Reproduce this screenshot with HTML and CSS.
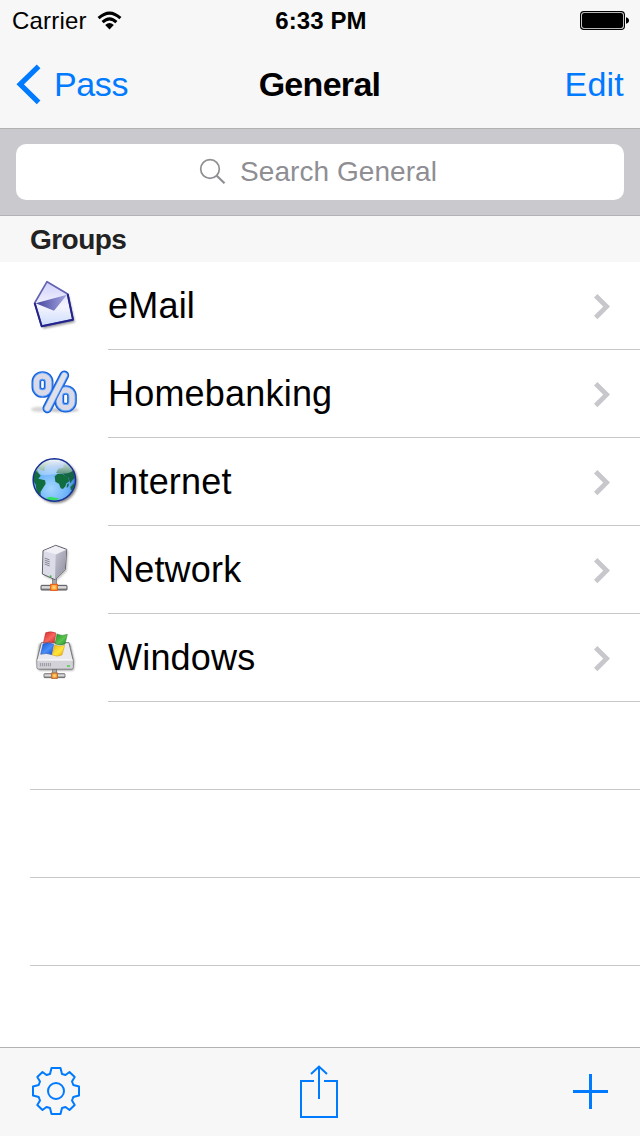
FILE: index.html
```
<!DOCTYPE html>
<html lang="en">
<head>
	<meta charset="UTF-8">
	<meta name="viewport" content="width=640">
	<title>General</title>
	<link rel="stylesheet" href="styles.css">
</head>
<body>
<header>
  <div class="status">
    <div class="carrier">
      <span>Carrier</span>
      <svg class="wifi" width="26" height="20" viewBox="0 0 26 20">
        <path d="M1.600 7.200Q12.500-3 23.400 7.200M5.600 11.200Q12.500 4.600 19.400 11.200" fill="none" stroke="#000" stroke-width="3"/>
        <path d="M8.200 14Q12.500 10 16.800 14L12.500 18.600Z"/>
      </svg>
    </div>
    <div class="time">6:33 PM</div>
    <svg class="battery" width="50" height="20" viewBox="0 0 50 20">
      <rect x=".6" y=".6" width="43.8" height="17.8" rx="3.2" fill="none" stroke="#000" stroke-width="1.2"/>
      <rect x="2" y="2" width="41" height="15" rx="2"/>
      <path d="M46 6.2Q49 7 49 9.5T46 12.8Z"/>
    </svg>
  </div>
  <nav>
    <a class="back">
      <svg width="26" height="42" viewBox="0 0 26 42"><path d="M23.6 3.3L5.2 21.3L23.6 39.3" fill="none" stroke="#007aff" stroke-width="5.2"/></svg>
      <span>Pass</span>
    </a>
    <h1>General</h1>
    <a class="edit">Edit</a>
  </nav>
</header>

<div class="search">
  <div class="field">
    <svg width="28" height="28" viewBox="0 0 28 28" fill="none" stroke="#8e8e93" stroke-width="1.7">
      <circle cx="11" cy="11" r="9.3"/>
      <path d="M17.5 17.5L25.5 25.3" stroke-width="2.2"/>
    </svg>
    <span>Search General</span>
  </div>
</div>

<main>
  <h2>Groups</h2>
  <ul class="groups">
    <li>
      <svg class="icon" viewBox="0 0 210 210">
        <defs>
          <linearGradient id="paper" x1="0" y1="0" x2="0" y2="1"><stop offset="0" stop-color="#d0d0fa"/><stop offset=".55" stop-color="#f4f4ff"/><stop offset="1" stop-color="#cdddfb"/></linearGradient>
          <linearGradient id="flap" x1="0" y1="0" x2="1" y2="0"><stop offset="0" stop-color="#46469c"/><stop offset="1" stop-color="#a4a4e2"/></linearGradient>
          <filter id="soft" x="-20%" y="-20%" width="140%" height="140%"><feGaussianBlur stdDeviation="2.5"/></filter>
        </defs>
        <path d="M50 103L85 41L146 77L165 157L70 176Z" fill="#666" opacity=".65" filter="url(#soft)"/>
        <path d="M44 99L81 35L143 72L159 149L65 169Z" fill="url(#paper)" stroke="#6262b4" stroke-width="5" stroke-linejoin="round"/>
        <path d="M47 100L141 74L102 122Z" fill="url(#flap)"/>
        <path d="M143 72L159 149L65 169L44 99" fill="none" stroke="#23238c" stroke-width="6" stroke-linejoin="round"/>
      </svg>
      <span>eMail</span>
      <svg class="more" viewBox="0 0 18 26"><path d="M2.700 1.700L13.600 12.600L2.700 23.500"/></svg>
    </li>
    <li>
      <svg class="icon" viewBox="0 0 210 210">
        <ellipse cx="57" cy="154" rx="24" ry="8" fill="#999" opacity=".4" filter="url(#soft)"/>
        <ellipse cx="130" cy="156" rx="46" ry="7" fill="#999" opacity=".55" filter="url(#soft)"/>
        <g fill="none" stroke-linecap="round">
          <g stroke="#1a5fd8" stroke-width="29">
            <rect x="49" y="54" width="37" height="51" rx="18"/>
            <rect x="118" y="96" width="38" height="53" rx="18"/>
            <path d="M133 52L82 151"/>
          </g>
          <g stroke="#5aa2fa" stroke-width="22">
            <rect x="49" y="54" width="37" height="51" rx="18"/>
            <rect x="118" y="96" width="38" height="53" rx="18"/>
          </g>
          <g stroke="#d9d9e7" stroke-width="16">
            <rect x="49" y="54" width="37" height="51" rx="18"/>
            <rect x="118" y="96" width="38" height="53" rx="18"/>
          </g>
          <path d="M133 52L82 151" stroke="#1a62dc" stroke-width="26"/>
          <path d="M133 52L82 151" stroke="#5aa2fa" stroke-width="21"/>
          <path d="M133 52L82 151" stroke="#e0e0eb" stroke-width="16"/>
        </g>
      </svg>
      <span>Homebanking</span>
      <svg class="more" viewBox="0 0 18 26"><path d="M2.700 1.700L13.600 12.600L2.700 23.500"/></svg>
    </li>
    <li>
      <svg class="icon" viewBox="0 0 210 210">
        <defs>
          <radialGradient id="sea" cx=".42" cy=".7" r=".68"><stop offset="0" stop-color="#a4d6ff"/><stop offset=".6" stop-color="#6cb2f8"/><stop offset="1" stop-color="#2a6cc4"/></radialGradient>
          <linearGradient id="shine" x1="0" y1="0" x2="0" y2="1"><stop offset="0" stop-color="#fff" stop-opacity=".95"/><stop offset="1" stop-color="#fff" stop-opacity=".25"/></linearGradient>
          <clipPath id="ball"><circle cx="103" cy="102" r="62"/></clipPath>
        </defs>
        <circle cx="108" cy="107" r="65" fill="#555" opacity=".7" filter="url(#soft)"/>
        <circle cx="103" cy="102" r="63" fill="url(#sea)"/>
        <g clip-path="url(#ball)">
          <path d="M36 70L52 68L56 82L62 89L55 98L75 103L77 113L69 126L62 137L62 151L50 138L47 116L38 101Z" fill="#126d3e"/>
          <path d="M104 91L113 83L127 83L135 90L144 92L148 106L138 113L137 120L129 129L122 127L117 113L106 107Z" fill="#126d3e"/>
          <path d="M108 81L115 68L130 65L132 52L158 62L168 94L158 101L151 112L145 94L135 91L129 83Z" fill="#156446"/>
          <path d="M141 115L147 112L145 122L140 126ZM151 123L163 110L165 130L153 133Z" fill="#126d3e"/>
          <path d="M49 67L61 49L82 44L96 48L75 59L73 75Z" fill="#39835c"/>
          <path d="M78 156L92 152L104 155L118 157L105 165L85 163Z" fill="#30de61"/>
        </g>
        <path d="M46 71Q58 41 103 40Q150 41 162 73Q144 86 117 83L78 88Q55 88 46 71Z" fill="url(#shine)"/>
        <circle cx="103" cy="102" r="63.5" fill="none" stroke="#182f94" stroke-width="4.5"/>
      </svg>
      <span>Internet</span>
      <svg class="more" viewBox="0 0 18 26"><path d="M2.700 1.700L13.600 12.600L2.700 23.500"/></svg>
    </li>
    <li>
      <svg class="icon" viewBox="0 0 210 210">
        <defs>
          <linearGradient id="side" x1="0" y1="0" x2="1" y2="1"><stop offset="0" stop-color="#c4c4d2"/><stop offset="1" stop-color="#8d8d9e"/></linearGradient>
          <linearGradient id="pipe" x1="0" y1="0" x2="0" y2="1"><stop offset="0" stop-color="#aaa"/><stop offset=".4" stop-color="#e6e6e6"/><stop offset="1" stop-color="#777"/></linearGradient>
          <radialGradient id="plug"><stop offset="0" stop-color="#ffe18a"/><stop offset="1" stop-color="#ff9a28"/></radialGradient>
        </defs>
        <path d="M74 54L111 37L144 50L140 111L108 142L72 126Z" fill="#777" opacity=".5" filter="url(#soft)"/>
        <rect x="98" y="130" width="11" height="26" fill="#a4a4aa" stroke="#666" stroke-width="2"/>
        <path d="M69 50L107 34L140 46L136 106L105 137L67 120Z" fill="#dcdce8" stroke="#606068" stroke-width="3" stroke-linejoin="round"/>
        <path d="M107 62L139 47L135 105L105 135Z" fill="url(#side)"/>
        <path d="M71 51L107 36L137 47L107 61Z" fill="#f0f0f6"/>
        <path d="M74 72L89 78M74 78L89 84M74 84L89 90M74 90L89 96" stroke="#73737f" stroke-width="2.5"/>
        <circle cx="92" cy="127" r="3" fill="#36c636"/>
        <rect x="63" y="154" width="78" height="14" rx="2" fill="url(#pipe)" stroke="#55555d" stroke-width="3"/>
        <rect x="92" y="151" width="20" height="18" fill="url(#plug)" stroke="#ee5a12" stroke-width="3"/>
      </svg>
      <span>Network</span>
      <svg class="more" viewBox="0 0 18 26"><path d="M2.700 1.700L13.600 12.600L2.700 23.500"/></svg>
    </li>
    <li>
      <svg class="icon" viewBox="0 0 210 210">
        <defs>
          <linearGradient id="red" x1="0" y1="0" x2="1" y2="1"><stop offset="0" stop-color="#dc1d24"/><stop offset=".55" stop-color="#f46a62"/><stop offset="1" stop-color="#cb2322"/></linearGradient>
          <linearGradient id="green" x1="0" y1="0" x2="1" y2="1"><stop offset="0" stop-color="#209421"/><stop offset=".55" stop-color="#5cc450"/><stop offset="1" stop-color="#198d20"/></linearGradient>
          <linearGradient id="blue" x1="0" y1="0" x2="1" y2="1"><stop offset="0" stop-color="#1451da"/><stop offset=".55" stop-color="#4a8ff8"/><stop offset="1" stop-color="#164dc9"/></linearGradient>
          <linearGradient id="yellow" x1="0" y1="0" x2="1" y2="1"><stop offset="0" stop-color="#f5b300"/><stop offset=".55" stop-color="#ffe63e"/><stop offset="1" stop-color="#e9a108"/></linearGradient>
        </defs>
        <path d="M58 66L151 66L163 119L160 145L57 145L51 119Z" fill="#555" opacity=".7" filter="url(#soft)"/>
        <path d="M64 62H147L159 113V137Q159 141 155 141H55Q51 141 51 137V113Z" fill="#e9e9ee" stroke="#77777d" stroke-width="3"/>
        <path d="M52 114H158V139H53Z" fill="#d2d2d8"/>
        <path d="M52 114H158" stroke="#fff" stroke-width="3"/>
        <path d="M61 123V133M67 123V133M73 123V133M79 123V133M85 123V133M91 123V133" stroke="#88888e" stroke-width="2.5"/>
        <rect x="141" y="130" width="9" height="4" fill="#42ce42"/>
        <path d="M77 32Q92 26 108 33L103 63Q87 57 70 63Z" fill="url(#red)" stroke="#b72328" stroke-width="1.5"/>
        <path d="M111 36Q126 44 142 37L135 66Q120 72 105 65Z" fill="url(#green)" stroke="#26752a" stroke-width="1.5"/>
        <path d="M69 66Q84 60 101 67L95 98Q79 91 62 97Z" fill="url(#blue)" stroke="#234ba7" stroke-width="1.5"/>
        <path d="M104 69Q118 76 134 70L126 99Q112 106 97 99Z" fill="url(#yellow)" stroke="#c89419" stroke-width="1.5"/>
        <rect x="98" y="142" width="12" height="13" fill="#aaa" stroke="#666" stroke-width="2"/>
        <rect x="72" y="155" width="63" height="12" rx="2" fill="url(#pipe)" stroke="#66666c" stroke-width="2.5"/>
        <rect x="95" y="153" width="17" height="16" fill="url(#plug)" stroke="#b66b32" stroke-width="3"/>
      </svg>
      <span>Windows</span>
      <svg class="more" viewBox="0 0 18 26"><path d="M2.700 1.700L13.600 12.600L2.700 23.500"/></svg>
    </li>
  </ul>
  <ul class="blank">
    <li></li>
    <li></li>
    <li></li>
  </ul>
</main>

<footer>
  <svg class="gear" width="50" height="48" viewBox="0 0 50 48" fill="none" stroke="#007aff" stroke-width="2" stroke-linejoin="round">
    <path d="M20.500 1H29.500L31 7L34.500 8L38.500 5L43.700 10L41 14.500L42.300 18L48 19.500V28.500L42.300 30L41 33.500L43.700 38L38.500 43L34.500 40L31 41L29.500 47H20.500L19 41L15.500 40L11.500 43L6.300 38L9 33.500L7.700 30L2 28.500V19.500L7.700 18L9 14.500L6.300 10L11.500 5L15.500 8L19 7Z"/>
    <circle cx="25" cy="24" r="8"/>
  </svg>
  <svg width="41" height="54" viewBox="0 0 41 54" fill="none" stroke="#007aff" stroke-width="2">
    <path d="M15 16H2V52H38V16H25M20 34V1.500M12 9L20 1.500L28 9"/>
  </svg>
  <svg class="add" width="36" height="36" viewBox="0 0 36 36" fill="none" stroke="#007aff" stroke-width="3">
    <path d="M18.500 0V35M1 17.500H36"/>
  </svg>
</footer>
</body>
</html>
```

FILE: styles.css
```
html, body {
  height: 100%;
  overflow: hidden;
}

body {
  display: flex;
  flex-direction: column;
  margin: 0;
  background: #fff;
  color: #000;
  font-family: "Liberation Sans", Arial, sans-serif;
}

ul {
  margin: 0;
  padding: 0;
  list-style-type: none;
}

h1, h2 {
  margin: 0;
}

svg {
  display: block;
  flex: none;
}

/* status bar and title */
header {
  box-sizing: border-box;
  height: 129px;
  background: #f7f7f7;
  border-bottom: 1px solid #b2b2b2;
}

.status {
  display: grid;
  grid-template-columns: 1fr auto 1fr;
  height: 40px;
  align-items: center;
  padding: 0 10px 0 12px;
  font-size: 24px;
}

.carrier {
  display: flex;
  align-items: center;
  gap: 10px;
  padding-top: 2px;
  letter-spacing: 0.2px;
}

.time {
  padding-top: 2px;
  font-weight: bold;
  font-size: 24px;
  letter-spacing: 0.1px;
}

.battery {
  justify-self: end;
  margin-top: 2px;
}

nav {
  display: grid;
  grid-template-columns: 1fr auto 1fr;
  height: 88px;
  align-items: center;
  padding: 0 16px 0 15px;
  font-size: 34px;
}

nav a {
  color: #007aff;
}

.back {
  display: flex;
  align-items: center;
  gap: 13px;
  letter-spacing: -0.4px;
}

nav h1 {
  font-size: 34px;
  letter-spacing: -0.7px;
}

.edit {
  justify-self: end;
  letter-spacing: 0.2px;
}

/* search */
.search {
  box-sizing: border-box;
  height: 87px;
  padding: 15px 16px;
  background: #c9c9ce;
  border-bottom: 1px solid #b2b2b7;
}

.field {
  display: flex;
  height: 56px;
  align-items: center;
  justify-content: center;
  gap: 13px;
  padding-right: 4px;
  border-radius: 10px;
  background: #fff;
  color: #8e8e93;
  font-size: 28px;
  letter-spacing: 0.05px;
}

/* list */
main {
  flex: 1;
}

h2 {
  height: 46px;
  padding-left: 30px;
  background: #f7f7f7;
  color: #222;
  font-size: 28px;
  line-height: 48px;
  letter-spacing: -0.55px;
}

.groups li {
  display: flex;
  height: 88px;
  padding: 0 29px 0 20px;
  font-size: 36px;
  line-height: 88px;
  letter-spacing: 0.2px;
  background: linear-gradient(#c8c7cc, #c8c7cc) 108px 100% / 100% 1px no-repeat;
}

.groups span {
  flex: 1;
}

.icon {
  width: 70px;
  height: 70px;
  margin: 8px 18px 0 0;
}

.more {
  width: 18px;
  height: 26px;
  margin-top: 32px;
  fill: none;
  stroke: #c7c7cc;
  stroke-width: 4.8;
}

.blank li {
  height: 87px;
  margin-left: 30px;
  border-bottom: 1px solid #c8c7cc;
}

/* toolbar */
footer {
  display: grid;
  grid-template-columns: 1fr auto 1fr;
  box-sizing: border-box;
  height: 89px;
  align-items: center;
  padding: 0 32px 0 31px;
  background: #f7f7f7;
  border-top: 1px solid #b2b2b2;
}

.gear {
  margin-top: -2px;
}

.add {
  justify-self: end;
}
```
